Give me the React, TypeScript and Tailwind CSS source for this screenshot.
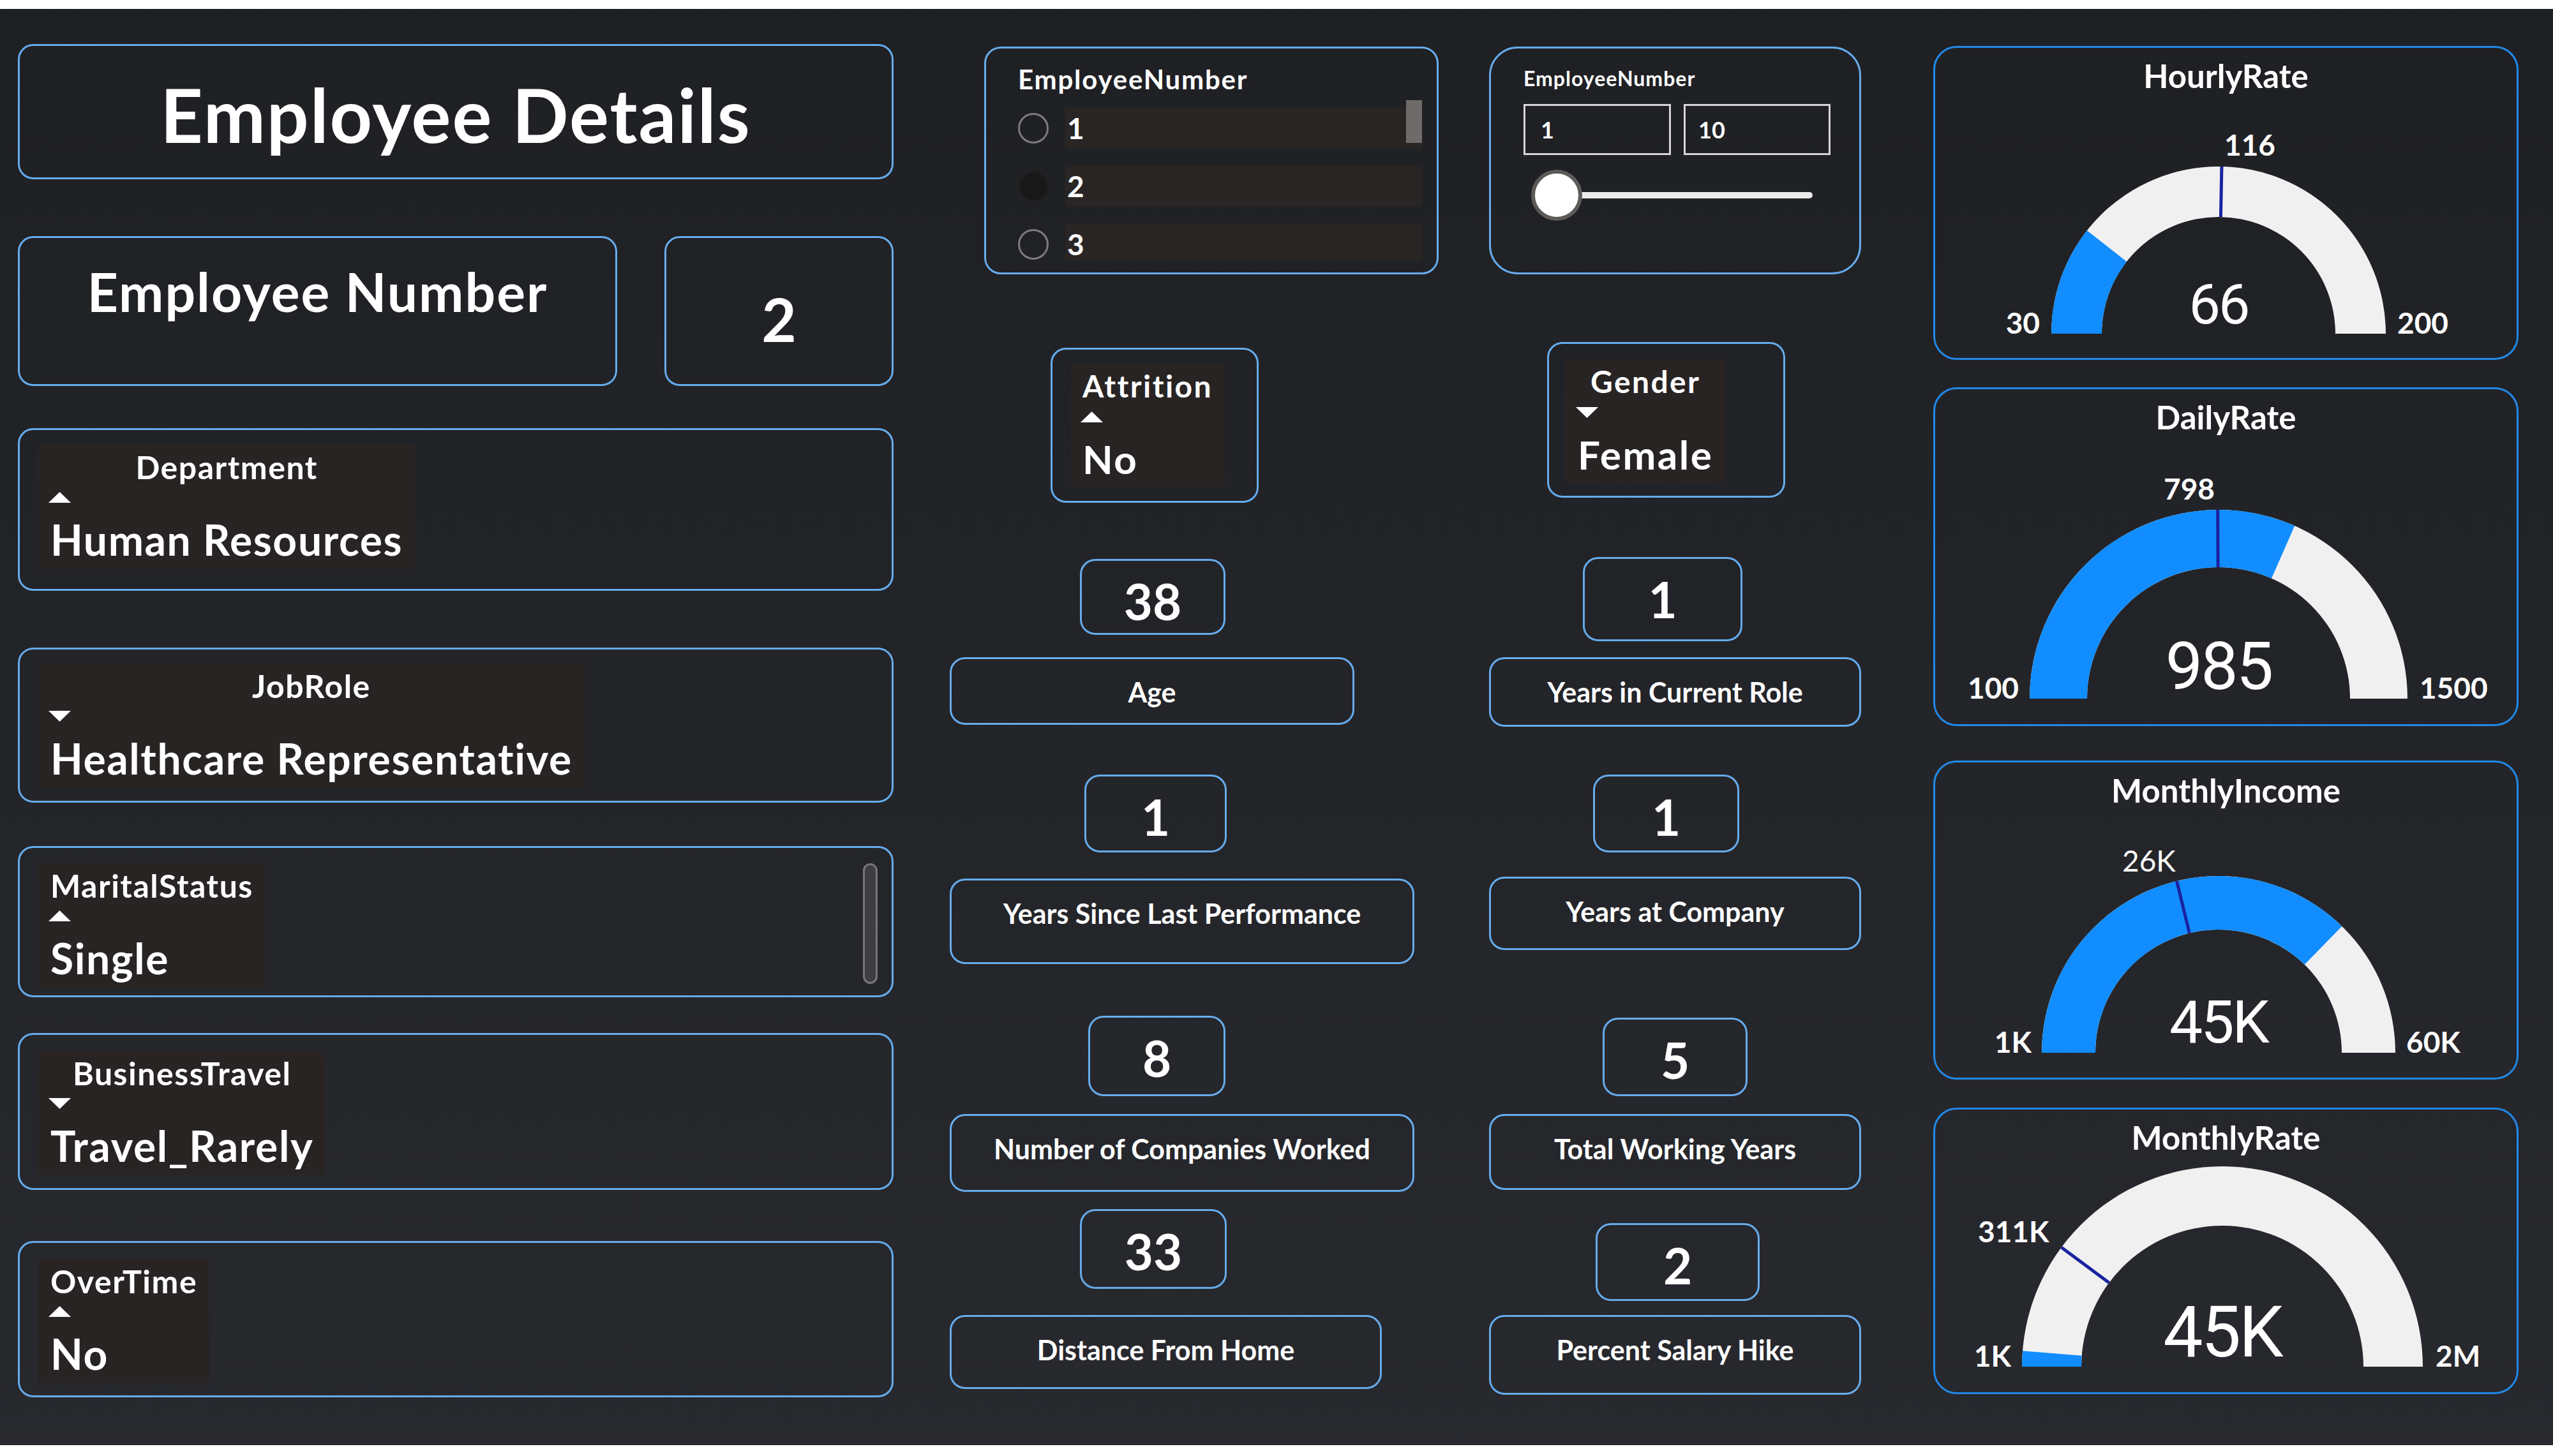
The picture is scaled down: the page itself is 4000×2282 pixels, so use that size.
import React from "react";

const BOX = "box-border border-[3px] border-[#66acec] rounded-[24px]";

function Arrow({ dir }: { dir: "up" | "down" }) {
  return (
    <svg width="35" height="17" viewBox="0 0 35 17" className="-ml-[3px]">
      {dir === "up" ? (
        <polygon points="17.5,0 35,17 0,17" fill="#ffffff" />
      ) : (
        <polygon points="0,0 35,0 17.5,17" fill="#ffffff" />
      )}
    </svg>
  );
}

function SlicerCard({
  label,
  value,
  dir,
  size,
}: {
  label: string;
  value: string;
  dir: "up" | "down";
  size: "lg" | "md";
}) {
  return (
    <div className="inline-flex flex-col bg-[#282423] px-[19px] pt-[10px] pb-[13px]">
      <div
        className={`${size === "lg" ? "text-[50px] tracking-[1.5px]" : "text-[48px] tracking-[2.4px]"} leading-none font-bold text-center whitespace-nowrap`}
      >
        {label}
      </div>
      <div className={size === "lg" ? "mt-[14px]" : "mt-[16px]"}>
        <Arrow dir={dir} />
      </div>
      <div
        className={`${size === "lg" ? "text-[66px] mt-[25px] tracking-[1.6px]" : "text-[62px] mt-[26px] tracking-[2.5px]"} leading-none font-bold whitespace-nowrap`}
      >
        {value}
      </div>
    </div>
  );
}

function ValueBox({ v, cls }: { v: string; cls: string }) {
  return (
    <div className={`${BOX} ${cls} flex justify-center pt-[24px] text-[78px] leading-none font-bold`}>
      {v}
    </div>
  );
}

function LabelBox({ t, cls }: { t: string; cls: string }) {
  return (
    <div className={`${BOX} ${cls} flex justify-center pt-[30px] text-[43px] leading-none font-bold whitespace-nowrap`}>
      {t}
    </div>
  );
}

function arc(cx: number, cy: number, R: number, r: number, f0: number, f1: number) {
  const p = (rad: number, f: number) => [
    cx - rad * Math.cos(Math.PI * f),
    cy - rad * Math.sin(Math.PI * f),
  ];
  const [x0, y0] = p(R, f0);
  const [x1, y1] = p(R, f1);
  const [x2, y2] = p(r, f1);
  const [x3, y3] = p(r, f0);
  return `M${x0} ${y0} A${R} ${R} 0 0 1 ${x1} ${y1} L${x2} ${y2} A${r} ${r} 0 0 0 ${x3} ${y3} Z`;
}

type GaugeProps = {
  title: string;
  cardCls: string;
  svgH: number;
  cx: number;
  cy: number;
  R: number;
  r: number;
  value: number;
  target: number;
  min: [string, number];
  max: [string, number];
  tgt: { text: string; x: number; y: number; bold: boolean };
  val: { text: string; size: number; y: number };
};

function Gauge(g: GaugeProps) {
  const a = Math.PI * g.target;
  return (
    <div
      className={`box-border w-[917px] border-[3px] border-[#2189e8] rounded-[37px] flex flex-col items-center ${g.cardCls}`}
    >
      <div className="pt-[18px] text-[51px] leading-none font-bold">{g.title}</div>
      <svg width="911" height={g.svgH} viewBox={`0 0 911 ${g.svgH}`}>
        <path d={arc(g.cx, g.cy, g.R, g.r, 0, 1)} fill="#f0f0f0" />
        <path d={arc(g.cx, g.cy, g.R, g.r, 0, g.value)} fill="#118dff" />
        <line
          x1={g.cx - g.r * Math.cos(a)}
          y1={g.cy - g.r * Math.sin(a)}
          x2={g.cx - g.R * Math.cos(a)}
          y2={g.cy - g.R * Math.sin(a)}
          stroke="#1a23a0"
          strokeWidth="5"
        />
        <g fill="#ffffff" fontFamily="Lato, sans-serif" fontSize="46" fontWeight="700">
          <text x={g.min[1]} y={g.cy} textAnchor="end">
            {g.min[0]}
          </text>
          <text x={g.max[1]} y={g.cy} textAnchor="start">
            {g.max[0]}
          </text>
          <text x={g.tgt.x} y={g.tgt.y} fontWeight={g.tgt.bold ? 700 : 400}>
            {g.tgt.text}
          </text>
        </g>
        <text
          x={g.cx}
          y={g.val.y}
          textAnchor="middle"
          fill="#ffffff"
          fontFamily="Roboto, sans-serif"
          fontSize={g.val.size}
          letterSpacing="-3"
        >
          {g.val.text}
        </text>
      </svg>
    </div>
  );
}

const listRows = ["1", "2", "3"];

export default function App() {
  return (
    <div className="w-[4000px] h-[2282px] bg-white pt-[14px]">
      <div className="h-[2251px] bg-linear-to-b from-[#1f2024] to-[#28292e] flex items-start pl-[28px] text-white font-['Lato',sans-serif]">
        {/* left column */}
        <div className="flex flex-col w-[1372px]">
          <div className={`${BOX} mt-[55px] h-[212px] flex justify-center pt-[50px] text-[116px] leading-none font-bold tracking-[2px]`}>
            Employee Details
          </div>
          <div className="mt-[89px] flex gap-[74px]">
            <div className={`${BOX} w-[939px] h-[235px] flex justify-center pt-[42px] text-[84px] leading-none font-bold tracking-[2px]`}>
              Employee Number
            </div>
            <div className={`${BOX} w-[359px] h-[235px] flex justify-center pt-[80px] text-[94px] leading-none font-bold`}>
              2
            </div>
          </div>
          <div className={`${BOX} mt-[66px] h-[255px] pt-[23px] pl-[29px]`}>
            <SlicerCard label="Department" value="Human Resources" dir="up" size="lg" />
          </div>
          <div className={`${BOX} mt-[89px] h-[243px] pt-[22px] pl-[29px]`}>
            <SlicerCard label="JobRole" value="Healthcare Representative" dir="down" size="lg" />
          </div>
          <div className={`${BOX} relative mt-[68px] h-[237px] pt-[24px] pl-[29px]`}>
            <SlicerCard label="MaritalStatus" value="Single" dir="up" size="lg" />
            <div className="absolute left-[1321px] top-[24px] w-[23px] h-[189px] rounded-full bg-[#3f3f41] border-[3px] border-[#77777a]" />
          </div>
          <div className={`${BOX} mt-[56px] h-[246px] pt-[25px] pl-[29px]`}>
            <SlicerCard label="BusinessTravel" value="Travel_Rarely" dir="down" size="lg" />
          </div>
          <div className={`${BOX} mt-[80px] h-[245px] pt-[25px] pl-[29px]`}>
            <SlicerCard label="OverTime" value="No" dir="up" size="lg" />
          </div>
        </div>

        {/* middle left column */}
        <div className="ml-[88px] w-[766px] flex flex-col items-start">
          <div className="box-border border-[3px] border-[#66acec] rounded-[26px] relative mt-[59px] ml-[54px] w-[712px] h-[357px] pt-[27px] pl-[50px] overflow-hidden">
            <div className="text-[42px] leading-none font-bold tracking-[1.8px]">EmployeeNumber</div>
            <div className="mt-[23px] h-[240px] overflow-hidden flex flex-col gap-[26px]">
              {listRows.map((n) => (
                <div key={n} className="flex items-center shrink-0 h-[65px]">
                  {n === "2" ? (
                    <div className="w-[48px] h-[48px] rounded-full bg-[#181818] border-[3px] border-[#1e1e1e]" />
                  ) : (
                    <div className="w-[48px] h-[48px] rounded-full border-[3px] border-[#7c7c7c]" />
                  )}
                  <div className="ml-[26px] w-[559px] h-[65px] bg-[#292524] flex items-center pl-[3px] text-[46px] leading-none font-bold">
                    {n}
                  </div>
                </div>
              ))}
            </div>
            <div className="absolute left-[658px] top-[81px] w-[25px] h-[67px] bg-[#6e6b6a]" />
          </div>

          <div className={`${BOX} mt-[115px] ml-[158px] w-[326px] h-[243px] pt-[23px] pl-[28px]`}>
            <SlicerCard label="Attrition" value="No" dir="up" size="md" />
          </div>

          <ValueBox v="38" cls="mt-[88px] ml-[204px] w-[228px] h-[119px]" />
          <LabelBox t="Age" cls="mt-[35px] w-[634px] h-[106px]" />
          <ValueBox v="1" cls="mt-[78px] ml-[211px] w-[223px] h-[122px]" />
          <LabelBox t="Years Since Last Performance" cls="mt-[41px] w-[728px] h-[134px]" />
          <ValueBox v="8" cls="mt-[81px] ml-[217px] w-[215px] h-[126px]" />
          <LabelBox t="Number of Companies Worked" cls="mt-[28px] w-[728px] h-[122px]" />
          <ValueBox v="33" cls="mt-[27px] ml-[204px] w-[230px] h-[125px]" />
          <LabelBox t="Distance From Home" cls="mt-[41px] w-[677px] h-[116px]" />
        </div>

        {/* middle right column */}
        <div className="ml-[79px] w-[583px] flex flex-col items-start">
          <div className="box-border border-[3px] border-[#66acec] rounded-[45px] mt-[59px] w-[583px] h-[357px] pt-[31px] pl-[51px]">
            <div className="text-[32px] leading-none font-bold tracking-[1px]">EmployeeNumber</div>
            <div className="mt-[24px] flex gap-[20px]">
              <div className="box-border w-[231px] h-[80px] border-[3px] border-[#d6d6d6] flex items-center pl-[24px] text-[36px] leading-none font-bold">
                1
              </div>
              <div className="box-border w-[230px] h-[80px] border-[3px] border-[#d6d6d6] flex items-center pl-[20px] text-[36px] leading-none font-bold">
                10
              </div>
            </div>
            <div className="mt-[23px] ml-[12px] flex items-center">
              <div className="relative z-10 box-border w-[80px] h-[80px] rounded-full bg-white border-[6px] border-[#5e5a5a]" />
              <div className="-ml-[10px] w-[371px] h-[10px] bg-[#ebebeb] rounded-r-full" />
            </div>
          </div>

          <div className={`${BOX} mt-[106px] ml-[91px] w-[373px] h-[244px] pt-[25px] pl-[26px]`}>
            <SlicerCard label="Gender" value="Female" dir="down" size="md" />
          </div>

          <ValueBox v="1" cls="mt-[93px] ml-[147px] w-[250px] h-[132px]" />
          <LabelBox t="Years in Current Role" cls="mt-[25px] w-[583px] h-[109px]" />
          <ValueBox v="1" cls="mt-[75px] ml-[163px] w-[229px] h-[122px]" />
          <LabelBox t="Years at Company" cls="mt-[38px] w-[583px] h-[115px]" />
          <ValueBox v="5" cls="mt-[106px] ml-[178px] w-[227px] h-[123px]" />
          <LabelBox t="Total Working Years" cls="mt-[28px] w-[583px] h-[119px]" />
          <ValueBox v="2" cls="mt-[52px] ml-[167px] w-[257px] h-[122px]" />
          <LabelBox t="Percent Salary Hike" cls="mt-[22px] w-[583px] h-[125px]" />
        </div>

        {/* gauges */}
        <div className="ml-[113px] w-[917px] flex flex-col">
          <Gauge
            title="HourlyRate"
            cardCls="mt-[58px] h-[492px]"
            svgH={417}
            cx={444}
            cy={379}
            R={262}
            r={183}
            value={0.2118}
            target={0.506}
            min={["30", 164]}
            max={["200", 724]}
            tgt={{ text: "116", x: 453, y: 100, bold: true }}
            val={{ text: "66", size: 88, y: 363 }}
          />
          <Gauge
            title="DailyRate"
            cardCls="mt-[43px] h-[531px]"
            svgH={456}
            cx={444}
            cy={416}
            R={296}
            r={206}
            value={0.632}
            target={0.4986}
            min={["100", 131]}
            max={["1500", 759]}
            tgt={{ text: "798", x: 358, y: 104, bold: true }}
            val={{ text: "985", size: 104, y: 401 }}
          />
          <Gauge
            title="MonthlyIncome"
            cardCls="mt-[54px] h-[500px]"
            svgH={425}
            cx={444}
            cy={386}
            R={277}
            r={193}
            value={0.746}
            target={0.424}
            min={["1K", 151]}
            max={["60K", 738]}
            tgt={{ text: "26K", x: 293, y: 102, bold: false }}
            val={{ text: "45K", size: 93, y: 370 }}
          />
          <Gauge
            title="MonthlyRate"
            cardCls="mt-[44px] h-[449px]"
            svgH={374}
            cx={450}
            cy={334}
            R={314}
            r={221}
            value={0.025}
            target={0.203}
            min={["1K", 119]}
            max={["2M", 784]}
            tgt={{ text: "311K", x: 67, y: 139, bold: true }}
            val={{ text: "45K", size: 111, y: 318 }}
          />
        </div>
      </div>
    </div>
  );
}
